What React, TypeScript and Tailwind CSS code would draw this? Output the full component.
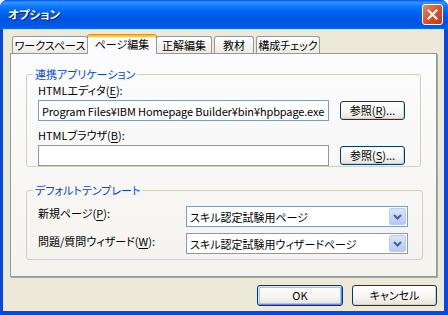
import React from "react";

const FONT = {
  fontFamily: '"Noto Sans CJK JP", "Liberation Sans", sans-serif',
  fontFeatureSettings: '"palt"',
};

function U({ c }: { c: string }) {
  return <span className="underline underline-offset-[2px]">{c}</span>;
}

function XpButton({ children, def = false, className = "" }: { children: React.ReactNode; def?: boolean; className?: string }) {
  return (
    <div
      className={
        "flex items-center justify-center rounded-[3px] border border-[#003c74] bg-[linear-gradient(to_bottom,#ffffff_0%,#f5f4f0_60%,#e6e3da_100%)] text-[11px] leading-none text-black " +
        (def ? "shadow-[inset_1px_1px_0_#cee7ff,inset_-1px_-1px_0_#6982ee,inset_0_0_0_2px_#a7c2f5] " : "shadow-[inset_-1px_-1px_0_#d6d0c5] ") +
        className
      }
    >
      {children}
    </div>
  );
}

function Tab({ label, selected = false, className = "" }: { label: string; selected?: boolean; className?: string }) {
  if (selected) {
    return (
      <div
        className={
          "relative z-10 -mb-px flex h-[20px] items-center justify-center whitespace-nowrap rounded-t-[3px] border border-b-0 border-[#919b9c] border-t-[#e68b2c] bg-[#fcfcfe] pb-[1px] text-[11px] leading-none shadow-[inset_0_2px_0_#ffc73c] " +
          className
        }
      >
        {label}
      </div>
    );
  }
  return (
    <div
      className={
        "flex h-[17px] items-center justify-center whitespace-nowrap rounded-t-[3px] border border-b-0 border-[#919b9c] bg-[linear-gradient(to_bottom,#ffffff,#ecebe6)] text-[11px] leading-none " +
        className
      }
    >
      {label}
    </div>
  );
}

function TextBox({ value = "" }: { value?: string }) {
  return (
    <div className="flex h-[21px] w-[291px] items-center overflow-hidden whitespace-nowrap border border-[#7f9db9] bg-white px-[3px] text-[11px] leading-[14px] tracking-[-0.12px]">
      {value}
    </div>
  );
}

function Combo({ value }: { value: string }) {
  return (
    <div className="flex h-[21px] w-[222px] items-center border border-[#7f9db9] bg-white pl-[3px] pr-[1px] text-[11px] leading-[14px]">
      <span className="flex-1 whitespace-nowrap">{value}</span>
      <div className="flex h-[17px] w-[17px] items-center justify-center rounded-[2px] border border-[#bccbf0] bg-[linear-gradient(to_bottom,#d9e4fc,#b6c8f6)]">
        <svg width="9" height="6" viewBox="0 0 9 6">
          <path d="M1 1 L4.5 4.5 L8 1" fill="none" stroke="#4d6185" strokeWidth="2" />
        </svg>
      </div>
    </div>
  );
}

export default function App() {
  return (
    <div className="flex h-[315px] w-[448px] flex-col overflow-hidden rounded-t-[7px] bg-[#0847e0] text-black" style={FONT}>
      {/* title bar */}
      <div className="flex h-[29px] shrink-0 items-center bg-[linear-gradient(to_bottom,#0058ee_0%,#3593ff_8%,#288eff_12%,#127dff_20%,#036ffc_32%,#0262ee_44%,#0057e5_60%,#0054e3_76%,#0055eb_88%,#005bf5_94%,#026afe_100%)] pl-[8px] pr-[5px]">
        <span className="flex-1 text-[11.5px] font-bold leading-none text-white [text-shadow:1px_1px_0_#0a1e60]">オプション</span>
        <div className="flex h-[21px] w-[21px] items-center justify-center rounded-[3px] border border-white bg-[linear-gradient(135deg,#e8825f,#d94a24_60%,#c23b18)]">
          <svg width="11" height="11" viewBox="0 0 11 11">
            <path d="M1.5 1.5 L9.5 9.5 M9.5 1.5 L1.5 9.5" stroke="#ffffff" strokeWidth="2.2" strokeLinecap="square" />
          </svg>
        </div>
      </div>

      {/* client area */}
      <div className="mb-[4px] ml-[3px] mr-[4px] flex flex-1 flex-col bg-[#ece9d8] px-[7px] pt-[5px] text-[11px]">
        {/* tabs */}
        <div className="flex h-[19px] items-end pl-[2px]">
          <Tab label="ワークスペース" className="w-[76px]" />
          <Tab label="ページ編集" selected className="-ml-px w-[70px]" />
          <Tab label="正解編集" className="-ml-px w-[56px]" />
          <Tab label="教材" className="ml-[2px] w-[40px]" />
          <Tab label="構成チェック" className="ml-[2px] w-[64px]" />
        </div>

        {/* panel */}
        <div className="flex h-[224px] flex-col border border-[#919b9c] bg-[linear-gradient(to_bottom,#fcfcfe,#f4f3ee)] px-[15px] pt-[14px] shadow-[1px_1px_0_#aca899]">
          <fieldset className="h-[99px] rounded-[3px] border border-[#d0d0bf] pl-[11px] pr-[15px]">
            <legend className="-ml-[5px] px-[2px] text-[11px] leading-[12px] text-[#0046d5]">連携アプリケーション</legend>
            <div className="pt-[4px] leading-[12px]">
              HTMLエディタ(<U c="E" />):
            </div>
            <div className="mt-[4px] flex items-center justify-between">
              <TextBox value="Program Files¥IBM Homepage Builder¥bin¥hpbpage.exe" />
              <XpButton className="h-[19px] w-[65px]">
                参照(<U c="R" />)...
              </XpButton>
            </div>
            <div className="pt-[8px] leading-[12px]">
              HTMLブラウザ(<U c="B" />):
            </div>
            <div className="mt-[4px] flex items-center justify-between">
              <TextBox />
              <XpButton className="h-[19px] w-[65px]">
                参照(<U c="S" />)...
              </XpButton>
            </div>
          </fieldset>

          <fieldset className="mt-[17px] h-[76px] rounded-[3px] border border-[#d0d0bf] pl-[11px] pr-[14px]">
            <legend className="-ml-[5px] px-[2px] text-[11px] leading-[12px] text-[#0046d5]">デフォルトテンプレート</legend>
            <div className="mt-[10px] flex items-start">
              <div className="w-[148px] pt-[1px] leading-[12px]">
                新規ページ(<U c="P" />):
              </div>
              <Combo value="スキル認定試験用ページ" />
            </div>
            <div className="mt-[6px] flex items-start">
              <div className="w-[148px] pt-[2px] leading-[12px]">
                問題/質問ウィザード(<U c="W" />):
              </div>
              <Combo value="スキル認定試験用ウィザードページ" />
            </div>
          </fieldset>
        </div>

        {/* buttons */}
        <div className="mt-[8px] flex justify-end gap-[9px]">
          <XpButton def className="h-[21px] w-[86px]">OK</XpButton>
          <XpButton className="h-[21px] w-[85px]">キャンセル</XpButton>
        </div>
      </div>
    </div>
  );
}
